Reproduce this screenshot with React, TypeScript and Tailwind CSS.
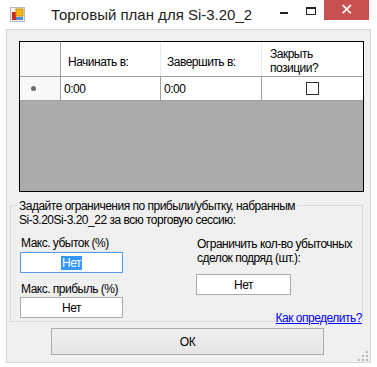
import React from 'react';

const font = "font-['Liberation_Sans',Arial,sans-serif]";

const AppIcon = () => (
  <svg width="15" height="15" viewBox="0 0 15 15">
    <rect x="0.5" y="0.5" width="14" height="14" fill="#f4f4f4" stroke="#b9b9b9" />
    <rect x="2" y="5" width="4" height="8" fill="#d02a20" />
    <rect x="6" y="2" width="7" height="7" fill="#f2b817" stroke="#d08a00" strokeWidth="1" />
    <rect x="6" y="10" width="7" height="3" fill="#4a8fdc" />
  </svg>
);

const Grip = () => (
  <svg width="10" height="10" viewBox="0 0 10 10">
    {[
      [8, 0],
      [8, 4],
      [4, 4],
      [8, 8],
      [4, 8],
      [0, 8],
    ].map(([x, y], i) => (
      <rect key={i} x={x} y={y} width="2" height="2" fill="#b8b8b8" />
    ))}
  </svg>
);

const TradingPlan: React.FC = () => {
  return (
    <div className={`w-[377px] h-[367px] bg-white text-black ${font} relative overflow-hidden`}>
      {/* Title bar */}
      <div className="h-[29px] flex items-start relative">
        <div className="ml-[10px] mt-[7px]">
          <AppIcon />
        </div>
        <div className="ml-[26px] mt-[5px] text-[15px] leading-[20px] text-[#222]">
          Торговый план для Si-3.20_2
        </div>
        <div className="ml-auto flex items-start">
          <div className="w-[8px] h-[2px] bg-[#222] mt-[12px] mr-[18px]" />
          <div className="w-[10px] h-[8px] border border-[#222] border-t-2 mt-[7px] mr-[8px]" />
          <div className="w-[45px] h-[20px] bg-[#c75050] text-white flex items-center justify-center text-[16px] leading-none">
            ✕
          </div>
          <div className="w-[8px]" />
        </div>
      </div>

      {/* Client area */}
      <div className="ml-[6px] w-[365px] h-[334px] border border-[#d9d9d9] bg-[#f0f0f0] relative flex flex-col text-[12px] leading-[14px] tracking-[-0.5px] whitespace-nowrap">
        {/* Data grid */}
        <div className="ml-[12px] mt-[11px] w-[345px] h-[151px] border border-black bg-[#ababab] flex flex-col">
          <div className="flex h-[35px] bg-white border-b border-[#a0a0a0]">
            <div className="w-[41px] border-r border-[#a0a0a0] bg-[#f8f8f8]" />
            <div className="w-[100px] border-r border-[#e3ecf7] pl-[7px] pt-[13px]">Начинать в:</div>
            <div className="w-[101px] border-r border-[#e3ecf7] pl-[6px] pt-[13px]">Завершить в:</div>
            <div className="flex-1 pl-[8px] pt-[5px]">
              Закрыть
              <br />
              позиции?
            </div>
          </div>
          <div className="flex h-[24px] bg-white border-b border-[#a0a0a0]">
            <div className="w-[41px] border-r border-[#a0a0a0] bg-[#f8f8f8] flex items-center pl-[11px]">
              <div className="w-[5px] h-[5px] rounded-full bg-[#6d6d6d]" />
            </div>
            <div className="w-[100px] border-r border-[#a0a0a0] pl-[3px] flex items-center">0:00</div>
            <div className="w-[101px] border-r border-[#a0a0a0] pl-[3px] flex items-center">0:00</div>
            <div className="flex-1 flex items-center justify-center">
              <div className="w-[13px] h-[13px] border border-[#333] bg-white" />
            </div>
          </div>
        </div>

        {/* Group box */}
        <div className="ml-[3px] mt-[13px] w-[353px] h-[117px] border border-[#dcdcdc] flex flex-col">
          <div className="self-start -mt-[7px] ml-[6px] px-[2px] bg-[#f0f0f0]">
            Задайте ограничения по прибыли/убытку, набранным
            <br />
            Si-3.20Si-3.20_22 за всю торговую сессию:
          </div>
          <div className="flex">
            <div className="ml-[9px] mt-[9px] w-[103px] flex flex-col">
              <div className="pl-[1px]">Макс. убыток (%)</div>
              <div className="mt-[2px] h-[21px] border border-[#569de5] bg-white flex items-center justify-center">
                <span className="bg-[#3399ff] text-white px-[1px]">Нет</span>
              </div>
              <div className="mt-[9px] pl-[1px]">Макс. прибыль (%)</div>
              <div className="mt-[1px] h-[21px] border border-[#abadb3] bg-white flex items-center justify-center">
                Нет
              </div>
            </div>
            <div className="ml-[73px] mt-[10px] flex flex-col">
              <div className="pl-[1px]">
                Ограничить кол-во убыточных
                <br />
                сделок подряд (шт.):
              </div>
              <div className="mt-[9px] w-[95px] h-[21px] border border-[#abadb3] bg-white flex items-center justify-center">
                Нет
              </div>
            </div>
          </div>
        </div>

        {/* Link */}
        <div className="flex justify-end -mt-[11px] mr-[8px] relative">
          <a href="#" className="bg-[#f0f0f0] text-[#0000ff] underline pl-[1px]">
            Как определить?
          </a>
        </div>

        {/* OK button */}
        <button className="ml-[44px] mt-[3px] w-[273px] h-[27px] border border-[#acacac] bg-gradient-to-b from-[#f0f0f0] to-[#e5e5e5] text-[12px]">
          ОК
        </button>

        <div className="absolute right-[2px] bottom-[1px]">
          <Grip />
        </div>
      </div>
    </div>
  );
};

export default function App() {
  return <TradingPlan />;
}
